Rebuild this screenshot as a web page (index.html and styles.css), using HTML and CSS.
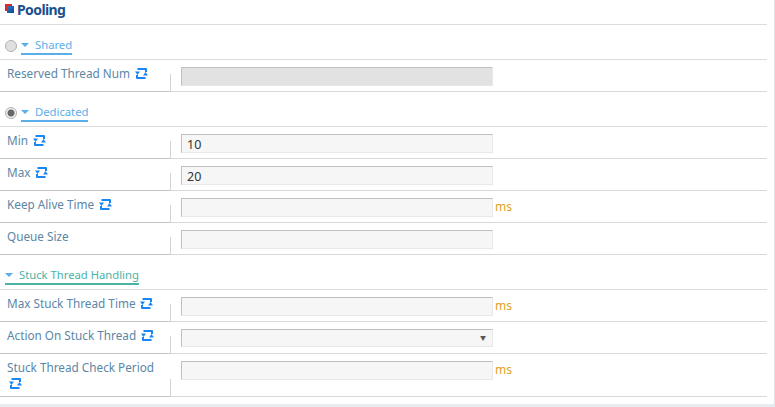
FILE: index.html
```html
<!DOCTYPE html>
<html lang="en">
<head>
    <meta charset="UTF-8">
    <meta name="viewport" content="width=device-width, initial-scale=1.0">
    <title>Pooling</title>
    <link rel="stylesheet" href="styles.css">
</head>
<body>
<svg class="defs" width="0" height="0">
    <symbol id="sync" viewBox="0 0 13 11">
        <path d="M2.5 1H11V4M10.5 10H2V7" fill="none" stroke="#1a86f5" stroke-width="2" stroke-linejoin="round"/>
        <path d="M0 3.5H5L2.5 7ZM8 7.5H13L10.5 4Z" fill="#1a86f5"/>
    </symbol>
</svg>
<div class="panel">
    <h1 class="title"><span class="title_icon"></span>Pooling</h1>

    <div class="sec_head">
        <span class="radio"></span>
        <span class="sec_name blue"><i class="tri"></i>Shared</span>
    </div>
    <div class="row">
        <div class="label">Reserved Thread Num <svg class="sync"><use href="#sync"/></svg></div>
        <div class="field"><div class="box box_off"></div></div>
    </div>

    <div class="sec_head">
        <span class="radio on"></span>
        <span class="sec_name blue"><i class="tri"></i>Dedicated</span>
    </div>
    <div class="row">
        <div class="label">Min <svg class="sync"><use href="#sync"/></svg></div>
        <div class="field"><div class="box">10</div></div>
    </div>
    <div class="row">
        <div class="label">Max <svg class="sync"><use href="#sync"/></svg></div>
        <div class="field"><div class="box">20</div></div>
    </div>
    <div class="row">
        <div class="label">Keep Alive Time <svg class="sync"><use href="#sync"/></svg></div>
        <div class="field"><div class="box"></div><span class="unit">ms</span></div>
    </div>
    <div class="row">
        <div class="label">Queue Size</div>
        <div class="field"><div class="box"></div></div>
    </div>

    <div class="sec_head">
        <span class="sec_name green"><i class="tri"></i>Stuck Thread Handling</span>
    </div>
    <div class="row">
        <div class="label">Max Stuck Thread Time <svg class="sync"><use href="#sync"/></svg></div>
        <div class="field"><div class="box"></div><span class="unit">ms</span></div>
    </div>
    <div class="row">
        <div class="label">Action On Stuck Thread <svg class="sync"><use href="#sync"/></svg></div>
        <div class="field"><div class="box box_select"><span class="arrow">▼</span></div></div>
    </div>
    <div class="row row_tall">
        <div class="label">Stuck Thread Check Period <svg class="sync"><use href="#sync"/></svg></div>
        <div class="field"><div class="box"></div><span class="unit">ms</span></div>
    </div>
</div>
</body>
</html>
```

FILE: styles.css
```css
html, body {
    margin: 0;
    padding: 0;
    height: 407px;
    overflow: hidden;
    background: #fff;
}
body {
    box-sizing: border-box;
    border-right: 1px solid #dfe3e6;
    border-bottom: 3px solid #e6ecf0;
    font-family: "Noto Sans", "Noto Sans CJK KR", sans-serif;
    font-size: 11.75px;
}
.defs {
    display: block;
    height: 0;
}
.panel {
    width: 767px;
}
.title {
    height: 24px;
    margin: 0;
    padding-left: 7px;
    display: flex;
    align-items: flex-start;
    gap: 3px;
    font-size: 14px;
    font-weight: bold;
    line-height: 19px;
    letter-spacing: -0.6px;
    color: #1c4f8c;
    border-bottom: 1px solid #dcdcdc;
}
.title_icon {
    width: 7px;
    height: 7px;
    margin-top: 6px;
    background: linear-gradient(135deg, #2b7cc4, #0e4a8e);
    box-shadow: -2px -2px 0 0 #e0262c;
}
.sec_head {
    height: 35px;
    padding: 0 0 4px 5px;
    display: flex;
    align-items: flex-end;
    gap: 4px;
    border-bottom: 1px solid #dcdcdc;
    box-sizing: border-box;
}
.radio {
    width: 12px;
    height: 12px;
    margin-bottom: 3px;
    box-sizing: border-box;
    border: 1px solid #b0b0b0;
    border-radius: 50%;
    background: #e0e0e0;
}
.radio.on {
    background: radial-gradient(circle, #666 0 3px, #f0f0f0 4px);
}
.sec_name {
    display: flex;
    align-items: flex-end;
    height: 18px;
    border-bottom: 2px solid;
    font-size: 11.25px;
    line-height: 17px;
}
.sec_name.blue {
    color: #5aaeec;
    border-color: #5aaeec;
}
.sec_name.green {
    color: #4ab3a6;
    border-color: #4ab3a6;
}
.tri {
    width: 0;
    height: 0;
    margin: 0 6px 6px 0;
    border-left: 4px solid transparent;
    border-right: 4px solid transparent;
    border-top: 4px solid #5aaeec;
}
.row {
    display: flex;
    height: 32px;
}
.row_tall {
    height: 43px;
}
.label {
    width: 170px;
    padding: 5px 0 0 7px;
    box-sizing: border-box;
    position: relative;
    border-bottom: 1px solid #c4c4c4;
    line-height: 16px;
    color: #5b86a6;
}
.label::after {
    content: "";
    position: absolute;
    right: -1px;
    bottom: -1px;
    height: 18px;
    border-right: 1px solid #d4d4d4;
}
.sync {
    width: 13px;
    height: 11px;
    margin-left: 1.5px;
    vertical-align: -1px;
}
.field {
    flex: 1;
    display: flex;
    align-items: flex-start;
    padding: 7px 0 0 11px;
    border-bottom: 1px solid #d9d9d9;
}
.box {
    width: 312px;
    height: 19px;
    box-sizing: border-box;
    padding-left: 5px;
    border: 1px solid #e8e8e8;
    border-top-color: #c0c0c0;
    border-left-color: #c0c0c0;
    background: #f6f6f6;
    font-size: 12.5px;
    color: #333;
    line-height: 19px;
}
.box_off {
    background: #e2e2e2;
}
.box_select {
    height: 18px;
    text-align: right;
    padding-right: 6px;
}
.arrow {
    font-size: 6px;
    line-height: 16px;
    color: #555;
    display: block;
}
.unit {
    margin-left: 2px;
    font-size: 12px;
    line-height: 17px;
    color: #e2a11f;
}
```
